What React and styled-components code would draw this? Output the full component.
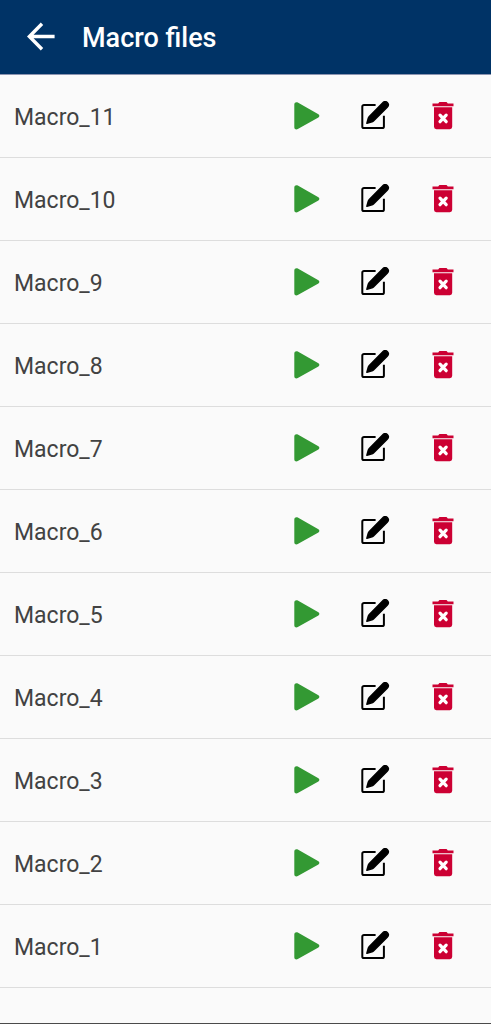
/* LIBS */
import React from 'react'
import styled, { createGlobalStyle } from 'styled-components'

const MACROS = [11, 10, 9, 8, 7, 6, 5, 4, 3, 2, 1].map(n => `Macro_${n}`)

const GlobalStyle = createGlobalStyle`
  * {
    box-sizing: border-box;
  }
  body {
    margin: 0;
    background-color: #FAFAFA;
    color: #424242;
    font-family: Roboto, "Liberation Sans", sans-serif;
  }
`

const Screen = styled.div`
  display: flex;
  flex-direction: column;
  min-height: 100vh;
  border-bottom: 1px solid #4A4A4A;
`

const Header = styled.header`
  display: flex;
  align-items: center;
  height: 75px;
  padding: 0 22px;
  background-color: #003366;
  border-bottom: 1px solid #8C94B0;
  color: #FFF;
`

const Title = styled.h1`
  margin: 0 0 0 22px;
  padding-top: 2px;
  font-size: 27px;
  line-height: 32px;
  font-weight: 500;
`

const IconButton = styled.button`
  display: flex;
  align-items: center;
  justify-content: center;
  width: 38px;
  height: 38px;
  padding: 0;
  border: 0;
  background: none;
  color: ${({ color }) => color || 'inherit'};
  cursor: pointer;
`

const List = styled.ul`
  margin: 0;
  padding: 0;
  list-style: none;
`

const Row = styled.li`
  display: flex;
  align-items: center;
  height: 83px;
  padding: 0 29px 0 14px;
  border-bottom: 1px solid #DDD;
`

const Name = styled.span`
  flex: 1;
  padding-top: 4px;
  font-size: 23px;
  line-height: 28px;
`

const Actions = styled.div`
  display: flex;
  gap: 30px;
`

const BackIcon = () => (
  <svg width="30" height="30" viewBox="0 0 30 30" fill="none" stroke="currentColor" strokeWidth="3.4">
    <path d="M28.6 14.5H3M16 1.8L3.4 14.5 16 27.2" />
  </svg>
)

const PlayIcon = () => (
  <svg width="30" height="30" viewBox="0 0 30 30" fill="currentColor">
    <path d="M2.3 3.4C2.3 1.5 4.2.6 5.8 1.5L26.4 13.2c1.3.8 1.3 2.4 0 3.2L5.8 28.1c-1.6.9-3.5 0-3.5-1.9z" />
  </svg>
)

const EditIcon = () => (
  <svg width="30" height="30" viewBox="0 0 30 30">
    <path
      d="M15.6 3.9H4a1.7 1.7 0 0 0-1.7 1.7v19.8A1.7 1.7 0 0 0 4 27.1h18.2a1.7 1.7 0 0 0 1.7-1.7V14.8"
      fill="none"
      stroke="currentColor"
      strokeWidth="2"
    />
    <path
      d="M6.9 22.3l1.4-5.1c.2-.7.5-1.2 1-1.7L22.6 1.9c1.4-1.4 3.4-1.6 4.7-.4 1.3 1.3 1.2 3.4-.1 4.8L13.7 19.6c-.5.5-1 .8-1.7 1.1z"
      fill="currentColor"
      stroke="currentColor"
      strokeWidth="1.5"
      strokeLinejoin="round"
    />
  </svg>
)

const DeleteIcon = () => (
  <svg width="30" height="30" viewBox="0 0 30 30" fill="currentColor">
    <path d="M10.2 2.4l.8-.9c.3-.3.6-.4 1-.4h6c.4 0 .7.1 1 .4l.8.9h5.7v2.8h-21V2.4z" />
    <path d="M6 6.2h18.2v19.6a2.4 2.4 0 0 1-2.4 2.4H8.4A2.4 2.4 0 0 1 6 25.8z" />
    <path d="M12 14.1l6.2 6.6M18.2 14.1L12 20.7" stroke="#FFF" strokeWidth="3.2" strokeLinecap="round" />
  </svg>
)

const MacroRow = ({ name }) => {
  return (
    <Row>
      <Name>{name}</Name>
      <Actions>
        <IconButton type="button" color="#339933" aria-label={`Run ${name}`}>
          <PlayIcon />
        </IconButton>
        <IconButton type="button" color="#000" aria-label={`Edit ${name}`}>
          <EditIcon />
        </IconButton>
        <IconButton type="button" color="#CC0033" aria-label={`Delete ${name}`}>
          <DeleteIcon />
        </IconButton>
      </Actions>
    </Row>
  )
}

const App = () => {
  return (
    <Screen>
      <GlobalStyle />
      <Header>
        <IconButton type="button" aria-label="Back">
          <BackIcon />
        </IconButton>
        <Title>Macro files</Title>
      </Header>
      <List>
        {MACROS.map(name => <MacroRow name={name} key={name} />)}
      </List>
    </Screen>
  )
}

export default App
